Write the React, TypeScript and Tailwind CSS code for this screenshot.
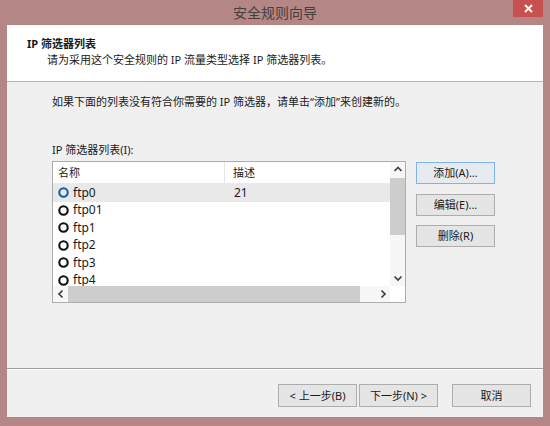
import React from "react";

const Chev = ({ dir }: { dir: "up" | "down" | "left" | "right" }) => {
  const d =
    dir === "up"
      ? "M1.5 6 L5 2.5 L8.5 6"
      : dir === "down"
      ? "M1.5 3.5 L5 7 L8.5 3.5"
      : dir === "left"
      ? "M6.5 1.5 L3 5 L6.5 8.5"
      : "M3.5 1.5 L7 5 L3.5 8.5";
  return (
    <svg width="10" height="10" viewBox="0 0 10 10">
      <path d={d} fill="none" stroke="#404040" strokeWidth="1.7" />
    </svg>
  );
};

const Ring = ({ blue }: { blue?: boolean }) => (
  <svg width="11" height="11" viewBox="0 0 11 11" className="shrink-0">
    <circle cx="5.5" cy="5.5" r="4.2" fill="none" stroke={blue ? "#1d5aa6" : "#111"} strokeWidth="2.1" />
  </svg>
);

const Btn = ({ label, def, w = "w-[79px]", h = "h-[22px]" }: { label: string; def?: boolean; w?: string; h?: string }) => (
  <div
    className={`${w} ${h} flex items-center justify-center border ${
      def ? "border-[#7eb4ea] bg-[#e6ebf0]" : "border-[#adadad] bg-[#e5e5e5]"
    } text-[11px] text-[#1a1a1a]`}
  >
    {label}
  </div>
);

const rows = ["ftp0", "ftp01", "ftp1", "ftp2", "ftp3", "ftp4"];

export default function App() {
  return (
    <div className="w-[550px] h-[426px] bg-[#b48685] flex flex-col px-[7px] pb-[9px] font-['Noto_Sans','Noto_Sans_CJK_SC',sans-serif] text-[11px] leading-[16px] text-[#1a1a1a]">
      {/* title bar */}
      <div className="h-[25px] shrink-0 grid grid-cols-[1fr_auto_1fr] -mx-[7px] px-[7px]">
        <div />
        <div className="text-[14px] leading-[26px] text-[#4a3d3d]">安全规则向导</div>
        <div className="flex justify-end">
          <div className="w-[30px] h-[17px] bg-[#c75050] flex items-center justify-center">
            <svg width="9" height="9" viewBox="0 0 9 9">
              <path d="M1 1 L8 8 M8 1 L1 8" stroke="#fff" strokeWidth="2" />
            </svg>
          </div>
        </div>
      </div>

      {/* client */}
      <div className="flex-1 bg-[#f0f0f0] flex flex-col">
        <div className="h-[57px] shrink-0 bg-white border-b border-[#b4b4b4] pl-[20px] pt-[11px]">
          <div className="font-bold">IP 筛选器列表</div>
          <div className="pl-[20px]">请为采用这个安全规则的 IP 流量类型选择 IP 筛选器列表。</div>
        </div>

        <div className="pl-[45px] pt-[12px] flex flex-col">
          <div>如果下面的列表没有符合你需要的 IP 筛选器，请单击“添加”来创建新的。</div>
          <div className="mt-[32px]">IP 筛选器列表(I):</div>
          <div className="mt-[3px] flex items-start">
            {/* list box */}
            <div className="w-[354px] h-[142px] border border-[#adadad] bg-white flex flex-col">
              <div className="flex-1 min-h-0 flex">
                <div className="flex-1 min-w-0 flex flex-col overflow-hidden">
                  <div className="h-[22px] shrink-0 flex border-b border-[#eaeaea]">
                    <div className="w-[172px] pl-[5px] flex items-center border-r border-[#e5e5e5]">名称</div>
                    <div className="pl-[8px] flex items-center">描述</div>
                  </div>
                  {rows.map((r, i) => (
                    <div
                      key={r}
                      className={`h-[17.5px] shrink-0 flex items-center ${i === 0 ? "bg-[#e9e9e9]" : ""}`}
                    >
                      <div className="w-[173px] pl-[5px] flex items-center gap-[4px] text-[12px]">
                        <Ring blue={i === 0} />
                        <span>{r}</span>
                      </div>
                      <div className="pl-[8px] text-[12px]">{i === 0 ? "21" : ""}</div>
                    </div>
                  ))}
                </div>
                {/* vertical scrollbar */}
                <div className="w-[15px] shrink-0 flex flex-col bg-[#f7f7f7]">
                  <div className="h-[16px] flex items-center justify-center">
                    <Chev dir="up" />
                  </div>
                  <div className="h-[57px] bg-[#cdcdcd]" />
                  <div className="flex-1" />
                  <div className="h-[16px] flex items-center justify-center">
                    <Chev dir="down" />
                  </div>
                </div>
              </div>
              {/* horizontal scrollbar */}
              <div className="h-[16px] shrink-0 flex">
                <div className="flex-1 flex bg-[#f7f7f7]">
                  <div className="w-[15px] flex items-center justify-center">
                    <Chev dir="left" />
                  </div>
                  <div className="w-[292px] bg-[#cdcdcd]" />
                  <div className="flex-1" />
                  <div className="w-[15px] flex items-center justify-center">
                    <Chev dir="right" />
                  </div>
                </div>
                <div className="w-[15px] bg-white" />
              </div>
            </div>

            {/* side buttons */}
            <div className="ml-[10px] flex flex-col">
              <div className="mt-[1px]">
                <Btn label="添加(A)..." def />
              </div>
              <div className="mt-[10px]">
                <Btn label="编辑(E)..." />
              </div>
              <div className="mt-[9px]">
                <Btn label="删除(R)" />
              </div>
            </div>
          </div>
        </div>

        {/* footer */}
        <div className="mt-auto h-[49px] shrink-0 border-t border-[#a0a0a0]">
          <div className="h-full border-t border-white flex justify-end items-start pt-[14px] pr-[12px]">
            <Btn label="< 上一步(B)" h="h-[23px]" />
            <div className="ml-[2px]">
              <Btn label="下一步(N) >" h="h-[23px]" />
            </div>
            <div className="ml-[14px]">
              <Btn label="取消" h="h-[23px]" />
            </div>
          </div>
        </div>
      </div>
    </div>
  );
}
